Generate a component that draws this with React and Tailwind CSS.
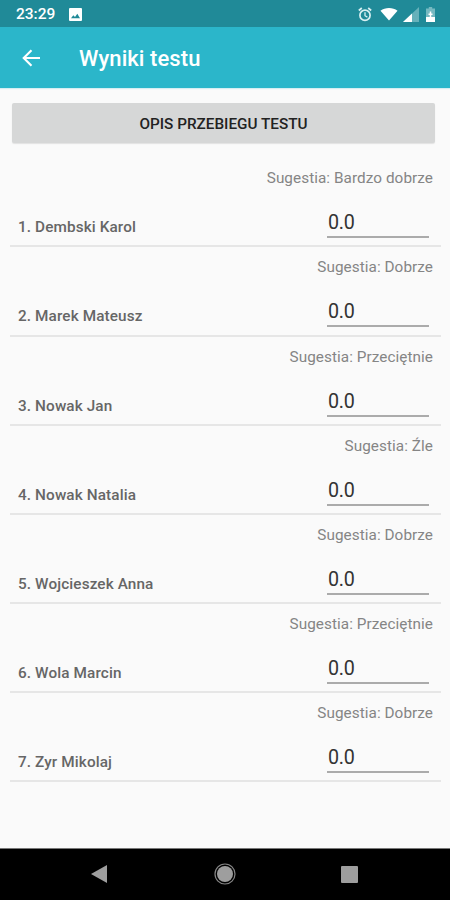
const results = [
  { name: '1. Dembski Karol', hint: 'Bardzo dobrze' },
  { name: '2. Marek Mateusz', hint: 'Dobrze' },
  { name: '3. Nowak Jan', hint: 'Przeciętnie' },
  { name: '4. Nowak Natalia', hint: 'Źle' },
  { name: '5. Wojcieszek Anna', hint: 'Dobrze' },
  { name: '6. Wola Marcin', hint: 'Przeciętnie' },
  { name: '7. Zyr Mikolaj', hint: 'Dobrze' },
];

function StatusBar() {
  return (
    <div className="flex h-[27px] shrink-0 items-center bg-[#208a98] pt-px pr-[15px] pl-4 text-white">
      <span className="w-[39px] pt-[2px] text-[15.5px] leading-none font-medium whitespace-nowrap">23:29</span>
      <svg className="ml-[14px] h-[13px] w-[13px]" viewBox="0 0 13 13">
        <rect width="13" height="13" rx="1" fill="#fff" />
        <path d="M2 10.3 4.3 7.2 6 9.1 8.3 5.8 11 10.3Z" fill="#208a98" />
      </svg>
      <div className="ml-auto flex items-center">
        <svg className="h-[15px] w-[14px]" viewBox="0 0 14 15" fill="none" stroke="#d9f0f2" strokeWidth="1.7">
          <circle cx="7" cy="8.3" r="5.1" />
          <path d="M.8 3.5 3.8 1M13.2 3.5 10.2 1" />
          <path d="M7 5.2v3.5l2.4 1.4" strokeWidth="1.3" />
        </svg>
        <svg className="ml-2 h-[14px] w-[18px]" viewBox="0 0 19 14">
          <path d="M.5 3.6C5.5-.4 13.5-.4 18.5 3.6L9.5 13.8Z" fill="#fff" />
        </svg>
        <svg className="ml-[5px] h-[15px] w-[16px]" viewBox="0 0 16 15">
          <path d="M0 15 16 0V15Z" fill="#66b1ba" />
          <path d="M0 15 9 6.5V15Z" fill="#fff" />
        </svg>
        <svg className="ml-[7px] h-[15px] w-[9px]" viewBox="0 0 9 15">
          <path d="M2.8 0h3.4v1.5H9V15H0V1.5h2.8Z" fill="#76b9c1" />
          <path d="M0 10h9v5H0Z" fill="#fff" />
          <path d="M4.5 4.5v6M2.5 7.2h4" stroke="#fff" strokeWidth="1.5" />
        </svg>
      </div>
    </div>
  );
}

function Toolbar() {
  return (
    <header className="flex h-[61px] shrink-0 items-center bg-[#2bb6ca] pl-[22px] text-white shadow-[0_1px_1px_#d5eef2]">
      <svg className="h-[18px] w-[18px]" viewBox="0 0 18 18" fill="none" stroke="#fff" strokeWidth="2.1">
        <path d="M18 9H1.7M9.5 1.2 1.7 9l7.8 7.8" />
      </svg>
      <h1 className="mt-[2px] ml-[39px] text-[22px] leading-none font-medium tracking-[0.08px] whitespace-nowrap">Wyniki testu</h1>
    </header>
  );
}

function ResultRow({ name, hint }) {
  return (
    <li className="flex h-[89.17px] flex-col border-b-2 border-[#e6e6e6]">
      <div className="mt-[10px] pr-2 text-right text-[15.3px] leading-[20px] tracking-[0.06px] text-[#858585]">
        Sugestia: {hint}
      </div>
      <div className="flex items-start justify-between pr-3 pl-2">
        <span className="mt-[29px] text-[15.3px] leading-[20px] font-medium tracking-[0.12px] text-[#666]">{name}</span>
        <span className="mt-[21px] h-[29px] w-[102px] border-b-2 border-[#ababab] pl-px text-[19.7px] leading-[27px] tracking-[-0.2px] text-[#333]">
          0.0
        </span>
      </div>
    </li>
  );
}

function NavigationBar() {
  return (
    <nav className="flex h-[52px] shrink-0 items-center border-t border-[#777] bg-black pb-px pl-[91px]">
      <svg className="h-[18px] w-4" viewBox="0 0 16 18">
        <path d="M0 9 16 0V18Z" fill="#9e9e9e" />
      </svg>
      <svg className="ml-[107px] h-[22px] w-[22px]" viewBox="0 0 22 22">
        <circle cx="11" cy="11" r="10" fill="none" stroke="#858585" strokeWidth="1.2" />
        <circle cx="11" cy="11" r="8" fill="#9e9e9e" />
      </svg>
      <span className="ml-[105px] h-[17px] w-[17px] rounded-[1px] bg-[#9e9e9e]" />
    </nav>
  );
}

export default function App() {
  return (
    <div className="flex h-[900px] w-[450px] flex-col overflow-hidden bg-[#fafafa] font-['Roboto',sans-serif]">
      <StatusBar />
      <Toolbar />
      <main className="flex-1">
        <button className="mt-[15px] ml-3 block h-[40px] w-[423px] rounded-[2px] bg-[#d6d7d7] pt-[2px] text-[15.3px] font-medium text-[#222] shadow-[0_1px_1px_#e2e2e2]">
          OPIS PRZEBIEGU TESTU
        </button>
        <ul className="mt-[15.3px] mr-[9px] ml-[10px]">
          {results.map((result) => (
            <ResultRow key={result.name} {...result} />
          ))}
        </ul>
      </main>
      <NavigationBar />
    </div>
  );
}
